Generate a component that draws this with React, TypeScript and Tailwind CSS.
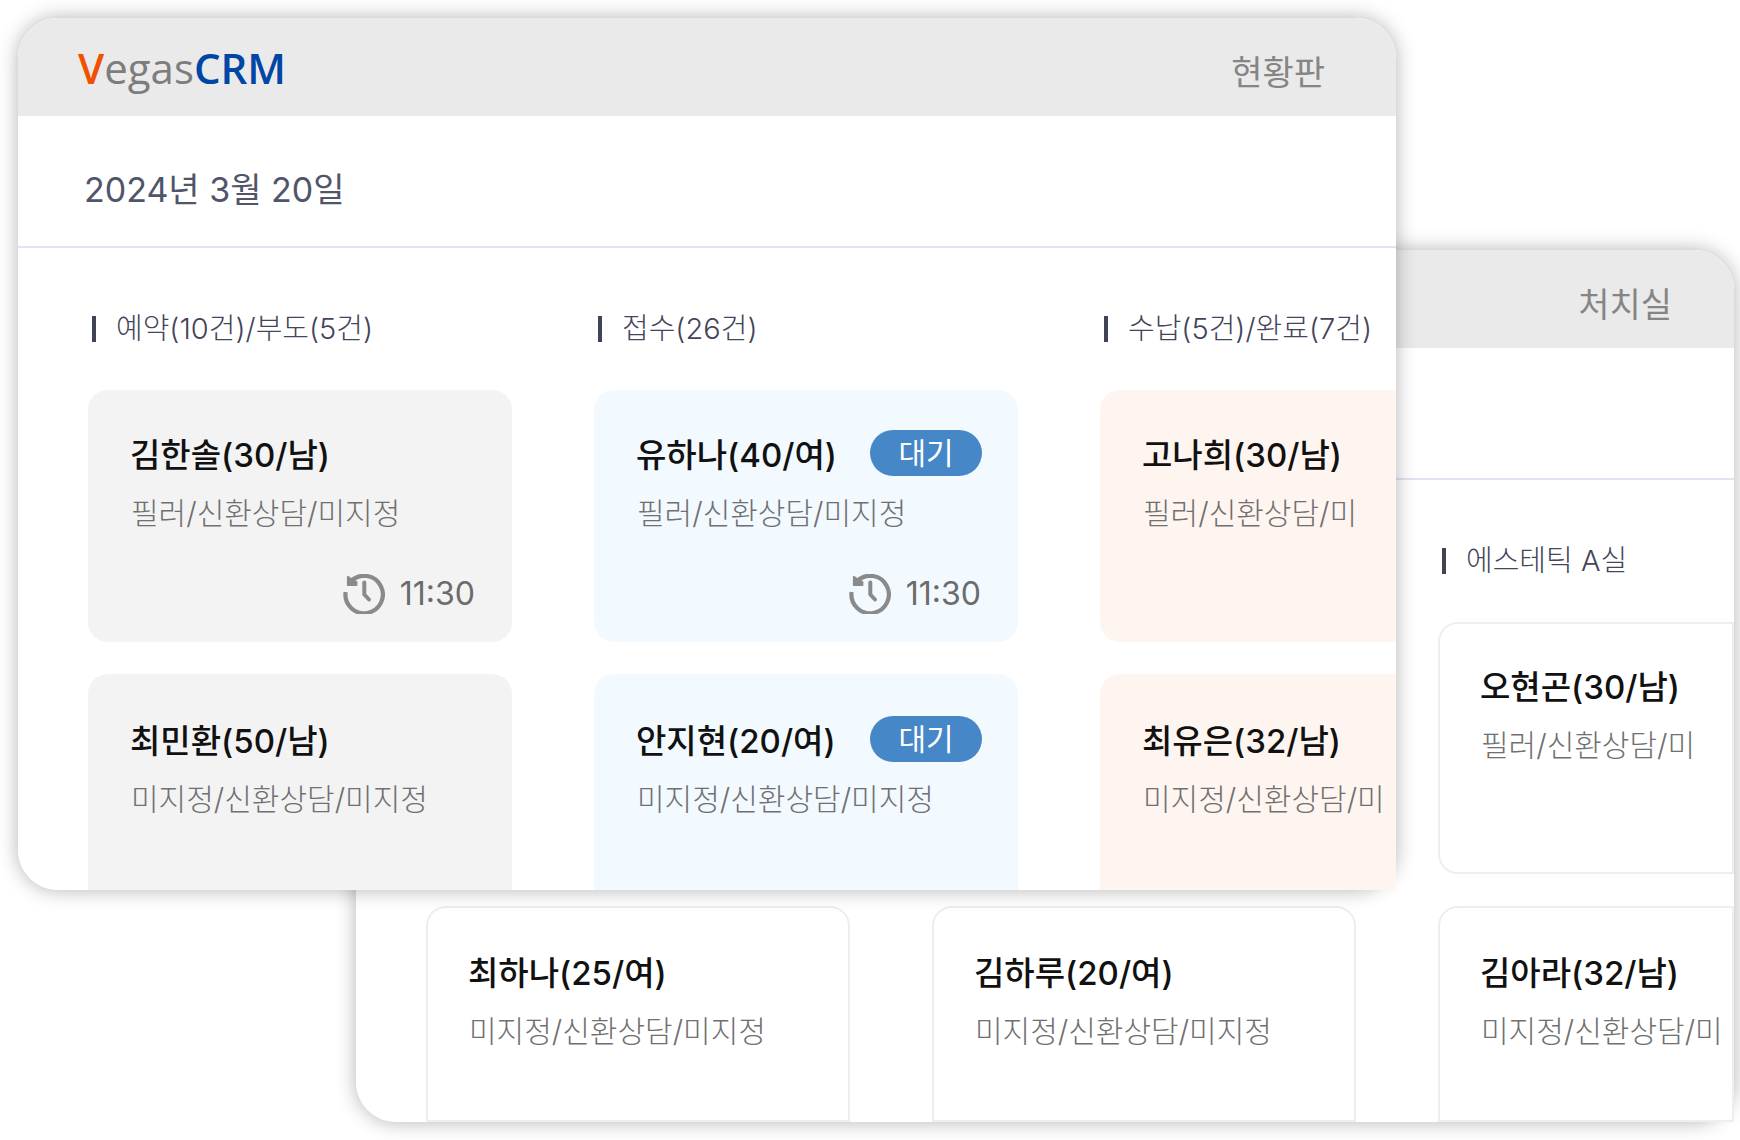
type Card = { name: string; detail: string; badge?: string; time?: string };
type Column = { title: string; cards: Card[] };

const tones = {
  gray: 'bg-[#f3f3f3]',
  blue: 'bg-[#f2f9ff]',
  peach: 'bg-[#fff5f0]',
  outline: 'border-2 border-[#eeeeee] bg-white',
};
type Tone = keyof typeof tones;

const boardColumns: (Column & { tone: Tone })[] = [
  {
    title: '예약(10건)/부도(5건)',
    tone: 'gray',
    cards: [
      { name: '김한솔(30/남)', detail: '필러/신환상담/미지정', time: '11:30' },
      { name: '최민환(50/남)', detail: '미지정/신환상담/미지정' },
    ],
  },
  {
    title: '접수(26건)',
    tone: 'blue',
    cards: [
      { name: '유하나(40/여)', detail: '필러/신환상담/미지정', badge: '대기', time: '11:30' },
      { name: '안지현(20/여)', detail: '미지정/신환상담/미지정', badge: '대기' },
    ],
  },
  {
    title: '수납(5건)/완료(7건)',
    tone: 'peach',
    cards: [
      { name: '고나희(30/남)', detail: '필러/신환상담/미' },
      { name: '최유은(32/남)', detail: '미지정/신환상담/미' },
    ],
  },
];

const roomColumns: (Column & { tone: Tone })[] = [
  {
    title: '',
    tone: 'outline',
    cards: [
      { name: '', detail: '' },
      { name: '최하나(25/여)', detail: '미지정/신환상담/미지정' },
    ],
  },
  {
    title: '',
    tone: 'outline',
    cards: [
      { name: '', detail: '' },
      { name: '김하루(20/여)', detail: '미지정/신환상담/미지정' },
    ],
  },
  {
    title: '에스테틱 A실',
    tone: 'outline',
    cards: [
      { name: '오현곤(30/남)', detail: '필러/신환상담/미' },
      { name: '김아라(32/남)', detail: '미지정/신환상담/미' },
    ],
  },
];

function HistoryIcon() {
  return (
    <svg viewBox="0 0 42 40" className="h-10 w-[42px]" fill="none" stroke="#8a8a8a" aria-hidden="true">
      <path d="M2.6 18 A18.7 18.7 0 1 0 8 7.2" strokeWidth="4.2" />
      <path d="M21.3 8.5 V20.5 L26 25.5" strokeWidth="4" strokeLinecap="round" strokeLinejoin="round" />
      <path d="M4.8 2.8 L8 5 L13.5 8 V11 H4.8 Z" fill="#8a8a8a" strokeWidth="1.8" strokeLinejoin="round" />
    </svg>
  );
}

function Logo() {
  return (
    <div className="flex items-baseline pt-0.5 font-['Open_Sans',sans-serif] text-[42px] leading-none">
      <span className="font-semibold text-[#f05000]">V</span>
      <span className="text-[#7d7d7d]">egas</span>
      <span className="font-semibold text-[#0046a5]">CRM</span>
    </div>
  );
}

function PatientCard({ card, tone, row, last }: { card: Card; tone: Tone; row: number; last: boolean }) {
  const top = row === 0;
  const shape = top
    ? last ? 'rounded-l-[20px] h-[252px]' : 'rounded-[20px] h-[252px]'
    : last ? 'rounded-tl-[20px] h-[216px]' : 'rounded-t-[20px] h-[216px]';
  return (
    <article className={`flex flex-col ${shape} ${tones[tone]}`}>
      <div className={`flex flex-col ${tone === 'outline' ? 'pl-[40px]' : 'pl-[42px]'} ${top ? (tone === 'outline' ? 'pt-[38px]' : 'pt-[40px]') : tone === 'outline' ? 'pt-[40px]' : 'pt-[42px]'}`}>
        <div className="flex h-[46px] items-center justify-between pr-9">
          <h3 className="pt-[5px] text-[33px] font-medium whitespace-nowrap text-[#111111]">{card.name}</h3>
          {card.badge && (
            <span className="flex h-[46px] w-[112px] items-center justify-center rounded-full bg-[#4687c8] text-[30px] text-white">
              {card.badge}
            </span>
          )}
        </div>
        <p className="mt-[13px] pl-px text-[30px] leading-[48px] font-light whitespace-nowrap text-[#707070]">{card.detail}</p>
      </div>
      {card.time && (
        <div className="mt-auto flex items-center justify-end gap-[15px] pr-[37px] pb-[26px]">
          <HistoryIcon />
          <time className="text-[32px] leading-[44px] text-[#6b6b6b]">{card.time}</time>
        </div>
      )}
    </article>
  );
}

function Window({
  title, brand, date, columns, className,
}: {
  title: string; brand?: boolean; date?: string; columns: (Column & { tone: Tone })[]; className: string;
}) {
  return (
    <section className={`col-start-1 row-start-1 self-start rounded-[40px] shadow-[0_0_20px_rgba(0,0,0,0.3)] ${className}`}>
      <div className="overflow-hidden rounded-[40px] rounded-br-none bg-white">
        <header className={`flex h-[98px] items-center justify-between bg-[#eaeaea] pl-[60px] ${brand ? 'pr-[71px]' : 'pr-[62px]'}`}>
          {brand ? <Logo /> : <span />}
          <h1 className="pt-2.5 text-[34px] text-[#858585]">{title}</h1>
        </header>
        <div className="flex h-[132px] items-center border-b-2 border-[#e1e5f1] pt-4 pl-[66px]">
          {date && <h2 className="text-[34px] text-[#505569]">{date}</h2>}
        </div>
        <div className="grid grid-cols-[424px_424px_1fr] gap-x-[82px] pt-[60px] pl-[70px]">
          {columns.map((column, c) => (
            <div key={c} className="min-w-0">
              <div className="mb-[40px] flex h-[42px] items-center gap-5 pl-1">
                {column.title && (
                  <>
                    <span className="h-[26px] w-1 bg-[#3f4354]" />
                    <h2 className="text-[29px] font-light whitespace-nowrap text-[#44445a]">{column.title}</h2>
                  </>
                )}
              </div>
              <div className="flex flex-col gap-8">
                {column.cards.map((card, r) => (
                  <PatientCard key={r} card={card} tone={column.tone} row={r} last={c === 2} />
                ))}
              </div>
            </div>
          ))}
        </div>
      </div>
    </section>
  );
}

export default function App() {
  return (
    <main className="grid min-h-screen overflow-hidden bg-white font-[Inter,'Noto_Sans_CJK_KR',sans-serif]">
      <Window title="처치실" columns={roomColumns} className="mt-[250px] mr-1.5 ml-[356px]" />
      <Window brand title="현황판" date="2024년 3월 20일" columns={boardColumns} className="z-10 mt-[18px] mr-[344px] ml-[18px]" />
    </main>
  );
}
